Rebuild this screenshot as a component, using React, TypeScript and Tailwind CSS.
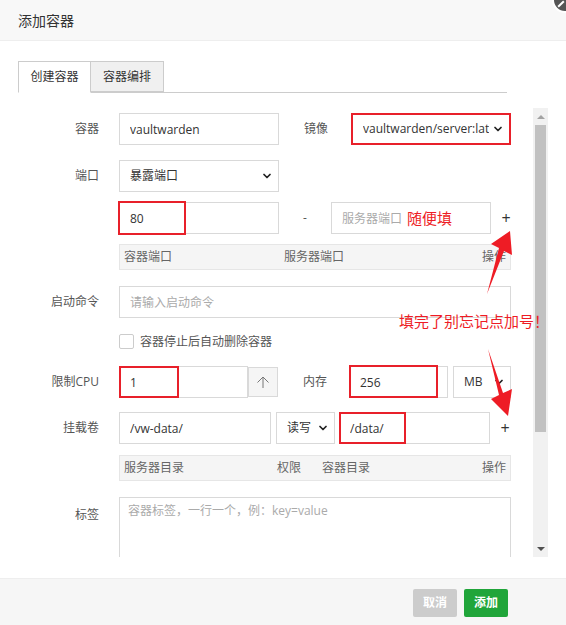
import { ChevronDown } from 'lucide-react';

const box =
  'h-[32px] border border-[#d9d9d9] bg-white px-[10px] text-[12px] text-[#333] outline-none placeholder:text-[#aaa]';

function Label({ children }: { children: React.ReactNode }) {
  return <div className="w-[81px] shrink-0 text-right pr-0 mr-[20px] text-[12px] text-[#555]">{children}</div>;
}

function Select({ text, className = '' }: { text: string; className?: string }) {
  return (
    <div
      className={`h-[32px] border border-[#d9d9d9] bg-white flex items-center justify-between pl-[10px] pr-[5px] text-[12px] text-[#333] ${className}`}
    >
      <span className="whitespace-nowrap overflow-hidden">{text}</span>
      <ChevronDown className="w-[12px] h-[12px] shrink-0 text-[#222]" strokeWidth={3.5} />
    </div>
  );
}

function RedBox({ className }: { className: string }) {
  return <div className={`absolute border-2 border-[#e8202a] pointer-events-none ${className}`} />;
}

export default function App() {
  return (
    <div className="relative w-[566px] h-[625px] bg-white overflow-hidden flex flex-col font-['Open_Sans','Noto_Sans_CJK_SC',sans-serif]">
      {/* Header */}
      <div className="h-[41px] shrink-0 bg-[#f8f8f8] border-b border-[#eee] flex items-center px-[18px] text-[14px] text-[#333]">
        添加容器
      </div>
      <div className="absolute -right-[12px] -top-[13px] w-[26px] h-[26px] rounded-full bg-[#555] border-2 border-white flex items-center justify-center">
        <div className="w-[2px] h-[8px] bg-white rotate-45 -translate-x-[4px] translate-y-[4px]" />
      </div>

      {/* Tabs */}
      <div className="mt-[20px] ml-[18px] w-[489px] h-[32px] flex border-b border-[#ccc] shrink-0">
        <div className="w-[73px] h-[32px] bg-white border border-[#ccc] border-b-white flex items-center justify-center text-[12px] text-[#333]">
          创建容器
        </div>
        <div className="w-[73px] h-[31px] bg-[#f0f0f0] border border-l-0 border-[#ccc] flex items-center justify-center text-[12px] text-[#333]">
          容器编排
        </div>
      </div>

      {/* Scroll area */}
      <div className="mt-[15px] ml-[18px] h-[449px] flex shrink-0">
        <div className="w-[515px] overflow-hidden">
          {/* 容器 / 镜像 */}
          <div className="flex items-center mt-[5px]">
            <Label>容器</Label>
            <input readOnly value="vaultwarden" className={`${box} w-[160px]`} />
            <div className="w-[49px] text-right text-[12px] text-[#555]">镜像</div>
            <Select text="vaultwarden/server:lat" className="ml-[23px] w-[160px] border-2 border-[#e8202a]" />
          </div>

          {/* 端口 */}
          <div className="flex items-center mt-[15px]">
            <Label>端口</Label>
            <Select text="暴露端口" className="w-[160px]" />
          </div>

          <div className="flex items-center mt-[10px] ml-[101px]">
            <div className="relative">
              <input readOnly value="80" className={`${box} w-[160px]`} />
              <RedBox className="-left-[1px] -top-[1px] w-[68px] h-[34px]" />
            </div>
            <div className="w-[52px] text-center text-[12px] text-[#555]">-</div>
            <div className="relative">
              <input readOnly placeholder="服务器端口" className={`${box} w-[160px]`} />
              <span className="absolute left-[76px] top-[5px] text-[15px] text-[#ee1c25]">随便填</span>
            </div>
            <div className="w-[30px] text-center text-[16px] text-[#333]">+</div>
          </div>

          <div className="mt-[10px] ml-[101px] w-[392px] h-[26px] bg-[#f5f5f5] border border-[#e6e6e6] flex items-center text-[12px] text-[#666] pl-[4px] pr-[4px]">
            <span className="w-[160px]">容器端口</span>
            <span className="flex-1">服务器端口</span>
            <span>操作</span>
          </div>

          {/* 启动命令 */}
          <div className="flex items-center mt-[16px]">
            <Label>启动命令</Label>
            <input readOnly placeholder="请输入启动命令" className={`${box} w-[392px]`} />
          </div>

          <div className="flex items-center mt-[16px] ml-[101px] h-[15px]">
            <div className="w-[15px] h-[15px] border border-[#ccc] rounded-[2px] bg-white" />
            <span className="ml-[6px] text-[12px] text-[#555]">容器停止后自动删除容器</span>
          </div>

          {/* 限制CPU / 内存 */}
          <div className="flex items-center mt-[17px]">
            <Label>限制CPU</Label>
            <div className="relative">
              <input readOnly value="1" className={`${box} w-[129px]`} />
              <RedBox className="left-0 top-0 w-[60px] h-[32px]" />
            </div>
            <div className="w-[30px] h-[30px] border border-[#d9d9d9] bg-[#f5f5f5] flex items-center justify-center">
              <svg width="14" height="14" viewBox="0 0 14 14" fill="none" stroke="#777" strokeWidth="1">
                <path d="M7 2 V13 M1.5 7.5 L7 2 L12.5 7.5" />
              </svg>
            </div>
            <div className="w-[49px] text-right text-[12px] text-[#555]">内存</div>
            <div className="relative ml-[22px]">
              <input readOnly value="256" className={`${box} w-[99px]`} />
              <RedBox className="left-0 -top-[1px] w-[89px] h-[33px]" />
            </div>
            <Select text="MB" className="ml-[5px] w-[58px]" />
          </div>

          {/* 挂载卷 */}
          <div className="flex items-center mt-[14px]">
            <Label>挂载卷</Label>
            <input readOnly value="/vw-data/" className={`${box} w-[152px]`} />
            <Select text="读写" className="ml-[5px] w-[59px]" />
            <div className="relative ml-[4px]">
              <input readOnly value="/data/" className={`${box} w-[151px]`} />
              <RedBox className="left-0 top-0 w-[67px] h-[32px]" />
            </div>
            <div className="w-[30px] text-center text-[16px] text-[#333]">+</div>
          </div>

          <div className="mt-[11px] ml-[101px] w-[392px] h-[26px] bg-[#f5f5f5] border border-[#e6e6e6] flex items-center text-[12px] text-[#666] pl-[4px] pr-[4px]">
            <span className="w-[153px]">服务器目录</span>
            <span className="w-[45px]">权限</span>
            <span className="flex-1">容器目录</span>
            <span>操作</span>
          </div>

          {/* 标签 */}
          <div className="flex items-start mt-[16px]">
            <div className="pt-[9px]">
              <Label>标签</Label>
            </div>
            <textarea
              readOnly
              placeholder="容器标签，一行一个，例：key=value"
              className="w-[392px] h-[80px] border border-[#d9d9d9] px-[8px] py-[4px] text-[12px] text-[#333] outline-none placeholder:text-[#aaa] resize-none"
            />
          </div>
        </div>

        {/* Scrollbar */}
        <div className="w-[15px] h-full bg-[#f1f1f1] flex flex-col items-center">
          <div className="h-[17px] flex items-center justify-center">
            <div className="w-0 h-0 border-x-[4px] border-x-transparent border-b-[4px] border-b-[#a3a3a3]" />
          </div>
          <div className="w-[11px] h-[307px] bg-[#c1c1c1]" />
          <div className="flex-1" />
          <div className="h-[17px] flex items-center justify-center">
            <div className="w-0 h-0 border-x-[4px] border-x-transparent border-t-[4px] border-t-[#505050]" />
          </div>
        </div>
      </div>

      {/* Footer */}
      <div className="mt-auto h-[47px] shrink-0 bg-[#f6f6f6] border-t border-[#eee] flex items-start justify-end pt-[10px] pr-[58px] gap-[7px]">
        <button className="w-[44px] h-[28px] rounded-[2px] bg-[#cccccc] text-white text-[12px] font-bold">取消</button>
        <button className="w-[44px] h-[28px] rounded-[2px] bg-[#20a53a] text-white text-[12px] font-bold">添加</button>
      </div>

      {/* Annotations */}
      <div className="absolute left-[399px] top-[310px] text-[15px] text-[#ee1c25] whitespace-nowrap">
        填完了别忘记点加号！
      </div>
      <svg className="absolute left-0 top-0 pointer-events-none" width="566" height="625">
        <polygon points="510,231 512,255 504,251 487,294 499,248 491,244" fill="#ee1c25" />
        <polygon points="488,349 503,393 512,389 508,416 491,399 499,395" fill="#ee1c25" />
      </svg>
    </div>
  );
}
